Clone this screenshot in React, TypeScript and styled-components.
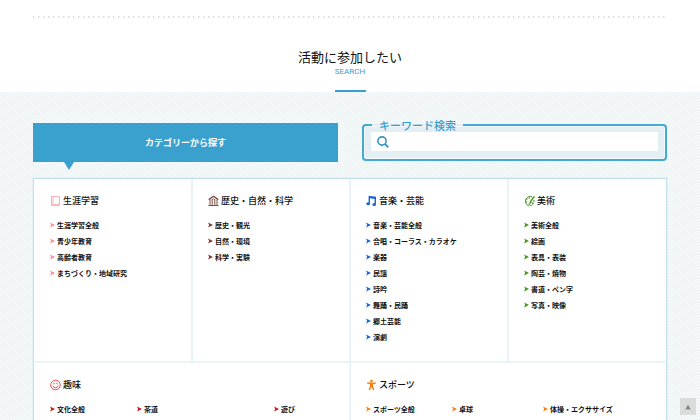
import React from "react";
import styled, { createGlobalStyle } from "styled-components";

const GlobalStyle = createGlobalStyle`
  *, *::before, *::after { box-sizing: border-box; }
  html { overflow: hidden; }
  body {
    margin: 0;
    background: #fff;
    color: #111;
    font-family: "Noto Sans CJK JP", sans-serif;
  }
  ul { margin: 0; padding: 0; list-style: none; }
`;

const Page = styled.main`
  display: flex;
  flex-direction: column;
  height: 100vh;
  overflow: hidden;
`;

const Intro = styled.header`
  display: flex;
  flex-direction: column;
  align-items: center;
  flex: none;
  padding: 16px 33px 0;
`;

const DottedRule = styled.div`
  align-self: stretch;
  height: 2px;
  background: repeating-linear-gradient(90deg, #dedede 0 1px, #f0f0f0 1px 2px, transparent 2px 5px);
`;

const Title = styled.h1`
  margin: 29px 0 0;
  font-size: 13px;
  line-height: 20px;
  font-weight: 400;
`;

const Subtitle = styled.p`
  margin: 0;
  color: #37a0cf;
  font-family: Roboto, sans-serif;
  font-size: 8px;
  line-height: 10px;
`;

const Accent = styled.div`
  width: 31px;
  height: 2px;
  margin-top: 13px;
  background: #37a0cf;
`;

const Search = styled.section`
  flex: 1 0 auto;
  padding: 26px 33px 0;
  background-color: #fafcfc;
  background-image: linear-gradient(45deg, #ebf3f5 25%, #fefefe 25% 50%, #ebf3f5 50% 75%, #fefefe 75%);
  background-size: 3px 3px;
`;

const Tools = styled.div`
  display: grid;
  grid-template-columns: 1fr 1fr;
  column-gap: 24px;
  align-items: start;
`;

const CategoryTab = styled.button`
  position: relative;
  height: 39px;
  margin-top: 5px;
  padding: 0;
  border: 0;
  background: #3aa1ce;
  color: #fff;
  font: 700 9px/13px "Noto Sans CJK JP", sans-serif;
  cursor: pointer;

  &::after {
    content: "";
    position: absolute;
    top: 100%;
    left: 31px;
    border: 5px solid transparent;
    border-top: 8px solid #3aa1ce;
    border-bottom: 0;
  }
`;

const Keyword = styled.fieldset`
  min-width: 0;
  margin: 0;
  padding: 0 7px 8px;
  border: 2px solid #43aad3;
  border-radius: 4px;
  background: #e4eff4;
  box-shadow: inset 0 0 0 1px #f4f9fb;
`;

const KeywordLegend = styled.legend`
  margin-left: 1px;
  padding: 0 7px;
  color: #37a0cf;
  font-size: 11px;
  line-height: 14px;
  font-weight: 500;
`;

const SearchField = styled.div`
  display: flex;
  align-items: center;
  height: 19px;
  padding-left: 6px;
  background: #fff;
`;

const SearchInput = styled.input`
  flex: 1;
  min-width: 0;
  height: 19px;
  padding: 0 6px;
  border: 0;
  outline: 0;
  background: transparent;
  font: 400 9px/13px "Noto Sans CJK JP", sans-serif;
`;

const Categories = styled.div`
  display: grid;
  grid-template-columns: repeat(4, 1fr);
  margin-top: 16px;
  border: 1px solid #c3e0ea;
  box-shadow: 0 0 0 1px #e3f0f5;
  background: #fff;
`;

const Category = styled.section<{ $wide?: boolean }>`
  grid-column: span ${(p) => (p.$wide ? 2 : 1)};
  padding: 15px 8px 16px 15px;
  border: solid #eaf3f8;
  border-width: 0 1px 2px;

  &:nth-child(1), &:nth-child(5) { border-left-color: transparent; }
  &:nth-child(4), &:nth-child(6) { border-right-color: transparent; }
`;

const CategoryTitle = styled.h2`
  display: flex;
  align-items: center;
  gap: 2px;
  margin: 0;
  font-size: 9px;
  line-height: 14px;
  font-weight: 500;

  svg { flex: none; }
`;

const Links = styled.ul<{ $columns?: string }>`
  display: grid;
  grid-template-columns: ${(p) => p.$columns ?? "1fr"};
  margin-top: 9px;
`;

const LinkItem = styled.li`
  height: 16px;
`;

const CategoryLink = styled.a`
  display: flex;
  align-items: center;
  gap: 2px;
  color: #111;
  font-size: 7px;
  line-height: 16px;
  font-weight: 700;
  text-decoration: none;
  white-space: nowrap;

  svg { flex: none; }
`;

const PageTop = styled.a`
  position: fixed;
  right: 4px;
  bottom: 5px;
  display: grid;
  place-items: center;
  width: 16px;
  height: 17px;
  background: #dadbdb;
`;

type IconKind = "book" | "museum" | "music" | "palette" | "smile" | "person";

const shapes: Record<IconKind, React.ReactNode> = {
  book: (
    <g fill="none" stroke="currentColor">
      <rect x="1.5" y="1.5" width="8" height="9" rx="0.8" strokeWidth="1.1" />
      <path d="M3 1.5v8M1.8 9.3h7.5" strokeWidth="0.9" />
    </g>
  ),
  museum: (
    <g fill="none" stroke="currentColor">
      <path d="M0.7 4.6 5.5 1.2l4.8 3.4" strokeWidth="1.3" />
      <path d="M2 4.5V9.5M4.2 4.2V9.5M6.8 4.2V9.5M9 4.5V9.5" strokeWidth="1" />
      <path d="M4.2 4.6q1.3-1.6 2.6 0" strokeWidth="0.9" />
      <path d="M0.5 10.4h10" strokeWidth="1.2" />
    </g>
  ),
  music: (
    <g fill="currentColor">
      <path d="M2.6 0.8 10 1.8V9H8.6V4L4 3.3V8.6H2.6z" />
      <ellipse cx="2.2" cy="8.8" rx="1.9" ry="1.5" />
      <ellipse cx="8.2" cy="9.4" rx="1.8" ry="1.5" />
    </g>
  ),
  palette: (
    <g fill="none" stroke="currentColor">
      <path d="M8 1.8A4.8 4.8 0 1 0 4.4 10.7c1.2 0 0.4-1.5 1.4-2.1" strokeWidth="1" />
      <path d="M10.3 1.2 6 7.4" strokeWidth="1.5" />
      <path d="M9.9 5A4.8 4.8 0 0 1 6.2 10.6" strokeWidth="1.1" strokeDasharray="2 0.8" />
      <g fill="currentColor" stroke="none">
        <circle cx="2.8" cy="4.2" r="0.8" />
        <circle cx="5.3" cy="3.1" r="0.8" />
        <circle cx="2.5" cy="7" r="0.8" />
        <circle cx="8" cy="7.8" r="0.8" />
        <path d="M6.3 6.4 3.9 9.7 7.1 8z" />
      </g>
    </g>
  ),
  smile: (
    <g fill="none" stroke="currentColor" strokeWidth="0.9">
      <circle cx="5.5" cy="6" r="4.8" />
      <path d="M4 3.7v1.6M7 3.7v1.6M2.9 6.6q0.4 2.2 2.6 2.2t2.6-2.2" />
    </g>
  ),
  person: (
    <g fill="currentColor">
      <circle cx="5.5" cy="2" r="1.3" />
      <path d="M1 3.6h9v1L7 5.2v2L8.5 11H7.2L5.5 8 3.8 11H2.5L4 7.2v-2L1 4.6z" />
    </g>
  ),
};

const CategoryIcon = ({ kind, color }: { kind: IconKind; color: string }) => (
  <svg width="11" height="12" viewBox="0 0 11 12" color={color} aria-hidden="true">
    {shapes[kind]}
  </svg>
);

const Arrow = ({ color }: { color: string }) => (
  <svg width="5" height="6" viewBox="0 0 5 6" aria-hidden="true">
    <path d="M0 0.4 5 3 0 5.6 1.2 3z" fill={color} />
  </svg>
);

interface CategoryData {
  title: string;
  icon: IconKind;
  color: string;
  arrow: string;
  links: string[];
  columns?: string;
}

const categories: CategoryData[] = [
  {
    title: "生涯学習",
    icon: "book",
    color: "#f8b0b9",
    arrow: "#f58d9b",
    links: ["生涯学習全般", "青少年教育", "高齢者教育", "まちづくり・地域研究"],
  },
  {
    title: "歴史・自然・科学",
    icon: "museum",
    color: "#7d4a3d",
    arrow: "#7d3a30",
    links: ["歴史・観光", "自然・環境", "科学・実験"],
  },
  {
    title: "音楽・芸能",
    icon: "music",
    color: "#1c63d2",
    arrow: "#1c63d2",
    links: ["音楽・芸能全般", "合唱・コーラス・カラオケ", "楽器", "民謡", "詩吟", "舞踊・民踊", "郷土芸能", "演劇"],
  },
  {
    title: "美術",
    icon: "palette",
    color: "#4b9a2c",
    arrow: "#3f981c",
    links: ["美術全般", "絵画", "表具・表装", "陶芸・焼物", "書道・ペン字", "写真・映像"],
  },
  {
    title: "趣味",
    icon: "smile",
    color: "#dc4046",
    arrow: "#d70f18",
    links: ["文化全般", "茶道", "遊び"],
    columns: "87px 137px 1fr",
  },
  {
    title: "スポーツ",
    icon: "person",
    color: "#fa7d0c",
    arrow: "#fa7d0c",
    links: ["スポーツ全般", "卓球", "体操・エクササイズ"],
    columns: "86px 91px 1fr",
  },
];

export default function App() {
  return (
    <Page id="top">
      <GlobalStyle />
      <Intro>
        <DottedRule />
        <Title>活動に参加したい</Title>
        <Subtitle>SEARCH</Subtitle>
        <Accent />
      </Intro>
      <Search>
        <Tools>
          <CategoryTab type="button">カテゴリーから探す</CategoryTab>
          <Keyword>
            <KeywordLegend>
              <label htmlFor="keyword">キーワード検索</label>
            </KeywordLegend>
            <SearchField>
              <svg width="12" height="12" viewBox="0 0 12 12" fill="none" stroke="#3796c2" aria-hidden="true">
                <circle cx="5" cy="5" r="4.1" strokeWidth="1.6" />
                <path d="m8 8 3.3 3.3" strokeWidth="1.9" />
              </svg>
              <SearchInput id="keyword" type="search" />
            </SearchField>
          </Keyword>
        </Tools>
        <Categories>
          {categories.map((category) => (
            <Category key={category.title} $wide={Boolean(category.columns)}>
              <CategoryTitle>
                <CategoryIcon kind={category.icon} color={category.color} />
                {category.title}
              </CategoryTitle>
              <Links $columns={category.columns}>
                {category.links.map((text) => (
                  <LinkItem key={text}>
                    <CategoryLink href="#">
                      <Arrow color={category.arrow} />
                      {text}
                    </CategoryLink>
                  </LinkItem>
                ))}
              </Links>
            </Category>
          ))}
        </Categories>
      </Search>
      <PageTop href="#top" aria-label="ページの先頭へ">
        <svg width="6" height="6" viewBox="0 0 6 6" aria-hidden="true">
          <path d="M3 0.5 5.8 5.5H0.2z" fill="#858585" />
        </svg>
      </PageTop>
    </Page>
  );
}
